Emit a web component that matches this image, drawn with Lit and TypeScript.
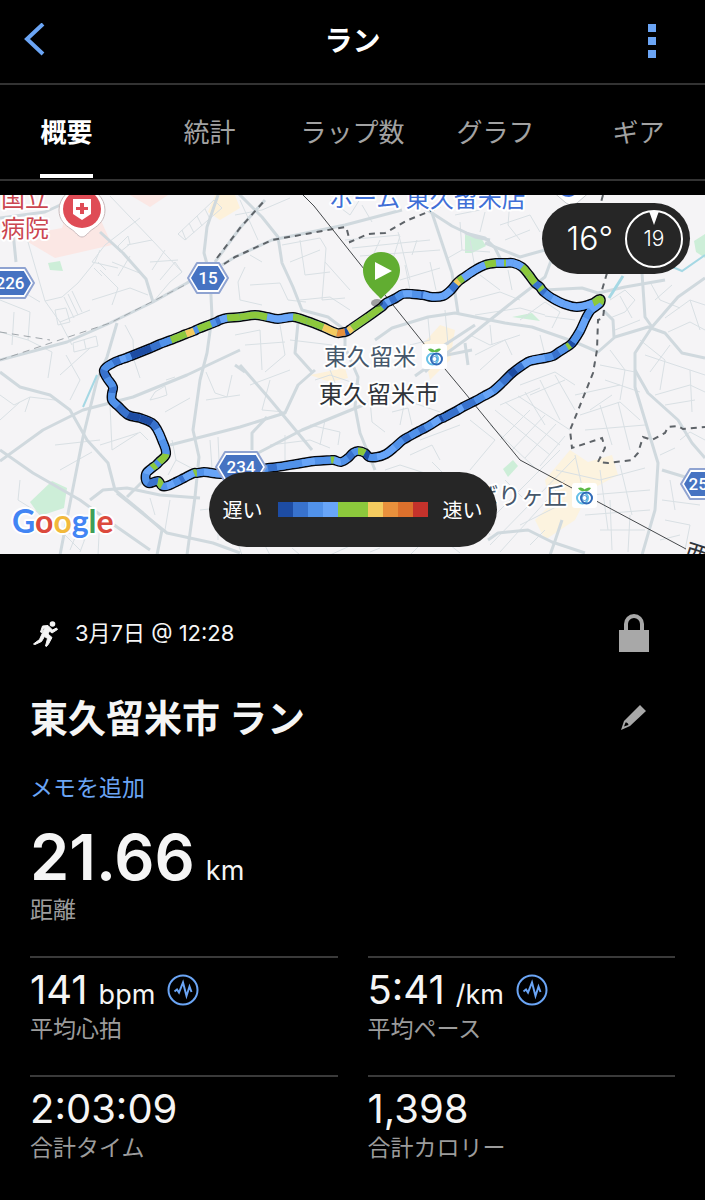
import { LitElement, html, css, svg } from "lit";
import { customElement, state, property } from "lit/decorators.js";
import { classMap } from "lit/directives/class-map.js";
import { styleMap } from "lit/directives/style-map.js";

const PACE = {
  n: "#1d4ca3",
  d: "#3872cd",
  m: "#5192ea",
  b: "#68a5f8",
  g: "#8cc83c",
  y: "#f4cb5f",
  o: "#e8903c",
  t: "#dc702c",
  r: "#c4322b",
};

type Tone = keyof typeof PACE;
type Stop = [number, number, Tone];

const LEGEND: Tone[] = ["n", "d", "m", "b", "g", "g", "y", "o", "t", "r"];

// Each stop carries the pace of the stretch that starts at it.
const ROUTE: Stop[] = [
  [382, 307, "g"], [368, 317, "g"], [352, 328, "y"], [348, 331, "n"], [345, 332, "o"], [337, 333, "y"],
  [323, 327, "g"], [307, 321, "g"], [293, 317, "b"], [278, 319, "b"], [267, 317, "g"], [255, 315, "g"],
  [240, 317, "g"], [227, 318, "b"], [220, 320, "d"], [216, 322, "m"], [211, 324, "g"], [198, 329, "m"],
  [194, 331, "y"], [186, 334, "g"], [171, 340, "m"], [160, 344, "d"], [151, 348, "n"], [131, 356, "m"],
  [126, 358, "b"], [120, 360, "d"], [113, 363, "m"], [104, 370, "d"], [107, 378, "m"], [113, 387, "d"],
  [112, 393, "m"], [112, 400, "m"], [118, 406, "d"], [128, 415, "n"], [140, 418, "n"], [152, 423, "d"],
  [157, 429, "b"], [162, 440, "m"], [166, 454, "g"], [159, 462, "m"], [156, 465, "g"], [152, 468, "b"],
  [146, 474, "m"], [148, 483, "d"], [158, 481, "g"], [162, 486, "m"], [167, 486, "b"],
  [174, 483, "m"], [180, 480, "d"], [184, 478, "b"], [194, 473, "g"], [197, 473, "m"], [204, 472, "b"],
  [220, 474, "b"], [240, 473, "m"], [268, 468, "d"], [277, 467, "m"], [302, 463, "b"], [315, 461, "m"],
  [331, 460, "g"], [334, 460, "b"], [341, 462, "m"], [348, 458, "d"], [353, 453, "m"], [358, 451, "g"],
  [365, 453, "n"], [369, 457, "m"], [377, 457, "b"], [386, 454, "b"], [395, 447, "m"], [403, 440, "d"],
  [410, 436, "m"], [419, 431, "d"], [425, 428, "m"], [432, 424, "b"], [440, 419, "n"], [443, 418, "d"],
  [458, 410, "b"], [463, 407, "d"], [475, 401, "m"], [484, 396, "b"], [493, 391, "m"], [502, 383, "d"],
  [510, 375, "n"], [516, 370, "d"], [523, 365, "b"], [530, 361, "b"], [545, 358, "m"], [553, 356, "d"],
  [559, 352, "m"], [567, 347, "g"], [570, 345, "n"], [573, 342, "m"], [580, 331, "b"], [586, 318, "m"],
  [591, 310, "b"], [600, 303, "g"], [600, 299, "g"], [593, 303, "b"], [577, 307, "b"], [564, 304, "b"],
  [552, 298, "m"], [545, 293, "d"], [542, 290, "g"], [540, 287, "d"], [535, 283, "g"], [529, 275, "g"],
  [522, 267, "b"], [513, 263, "b"], [506, 263, "g"], [504, 263, "b"], [496, 263, "g"], [485, 265, "b"],
  [475, 270, "b"], [463, 278, "g"], [459, 281, "y"], [456, 284, "d"], [451, 290, "b"], [443, 296, "b"],
  [432, 297, "b"], [423, 295, "d"], [421, 295, "m"], [412, 294, "b"], [403, 294, "m"], [396, 298, "d"],
  [390, 301, "b"], [386, 303, "d"], [382, 307, "m"],
];

const curves = ROUTE.slice(0, -1).map((p, i) => {
  const q = ROUTE[i + 1];
  const a = ROUTE[i - 1] ?? p;
  const z = ROUTE[i + 2] ?? q;
  const reach = Math.hypot(q[0] - p[0], q[1] - p[1]);
  const span = (s: Stop, e: Stop) => Math.hypot(e[0] - s[0], e[1] - s[1]) || 1;
  const k1 = reach / 3 / span(a, q);
  const k2 = reach / 3 / span(p, z);
  const c1 = [p[0] + (q[0] - a[0]) * k1, p[1] + (q[1] - a[1]) * k1];
  const c2 = [q[0] - (z[0] - p[0]) * k2, q[1] - (z[1] - p[1]) * k2];
  const n = (v: number) => v.toFixed(1);
  return {
    tone: p[2],
    from: `M${p[0]} ${p[1]}`,
    to: `C${n(c1[0])} ${n(c1[1])} ${n(c2[0])} ${n(c2[1])} ${q[0]} ${q[1]}`,
  };
});
const routeLine = curves[0].from + curves.map((c) => c.to).join("");

const ROADS = [
  "M218 195L207 227L204 253L210 275L212 317L207 353L200 380L193 430L199 457L195 497L187 555",
  "M100 232L123 253L146 279L153 302",
  "M0 360L67 342L110 323L153 302L187 283L200 274",
  "M117 323L107 357L97 380L83 437L72 493L60 555",
  "M0 372L20 387L50 395L70 410L87 440L108 463L115 490L143 513L162 530L157 555",
  "M0 450L33 473L80 500L117 527L150 550",
  "M0 461L43 430L83 410L133 397L187 375L240 350",
  "M90 500L103 490L127 488L160 495L200 498",
  "M127 497L147 477",
  "M117 493L167 533L213 543L240 553",
  "M170 445L240 427L285 413L298 385L315 370",
  "M235 190L262 217L278 237L282 263L293 287L302 310L328 317L345 330L345 347L358 377L355 407L360 433L375 470",
  "M298 323L295 353L312 372",
  "M222 265L235 257L272 240L345 225L402 210",
  "M215 262L240 228L265 200",
  "M420 205L432 213L452 226L475 237L490 240",
  "M432 213L442 243L452 273L458 313",
  "M375 340L392 328L428 317L455 313L505 323L532 327L575 342L598 352L615 337L648 327L665 333L682 353L705 358",
  "M705 278L678 297L652 327L635 353L635 387L648 430L658 463L655 510L642 555",
  "M635 370L648 393L678 420L692 443L705 458",
  "M662 470L685 477",
  "M415 376L465 340L515 300L545 277L552 258",
  "M465 233L485 238L495 248L502 262",
  "M485 243L520 257L545 250",
  "M545 290L582 288L598 293L625 287L665 280",
  "M642 273L645 317L652 327",
  "M465 343L468 365",
  "M603 310L613 320L614 337",
  "M488 540L498 533L528 530L552 542L585 553",
  "M550 555L555 541L562 520",
  "M240 365L268 397L298 433L312 450",
  "M258 453L302 430L368 403",
  "M252 450L252 433L267 417",
  "M235 365L245 372",
  "M0 218L45 212L80 196",
  "M12 222L16 262",
  "M440 348L475 325",
  "M425 372L442 356L472 350",
];

const LANES = [
  "M110 196L152 240L182 272L170 282L153 302M127 245L152 240M140 218L105 245L92 262L118 268",
  "M28 242L45 301L62 297L78 283L95 262L100 250M45 301L60 322L72 345M60 322L90 310",
  "M20 290L40 302M0 300L30 312L28 340L52 352L48 378M28 340L0 332M14 312L12 345",
  "M64 297L74 318M68 294L78 315M72 291L82 312M55 310L66 308L70 322L58 325Z",
  "M178 234L185 240L222 208L214 200ZM186 240L182 230M194 233L189 223M202 226L197 216M210 219L205 209",
  "M92 300L130 288L148 295M100 270L118 288L112 305M118 246L128 236L130 244L120 252Z",
  "M98 262L106 270M94 268L102 276M112 262L142 274M130 256L118 276",
  "M160 280L175 262L182 272M150 262L178 260M165 250L152 270",
  "M73 343L96 336L98 346L74 352ZM84 340L86 349",
  "M0 395L14 405L30 397L55 400M30 397L25 412M0 420L20 402",
  "M125 325L133 340L134 360L140 378M60 375L90 348M66 355L80 380L70 400",
  "M110 404L112 450L140 432L148 440M100 445L138 433M55 445L100 440M60 470L92 452",
  "M150 400L155 392L165 386L167 395L158 398ZM166 380L175 377",
  "M206 372L215 393L227 397L232 375M206 400L240 395M165 412L190 398",
  "M172 440L176 460L195 470M176 460L168 475M210 440L212 468M218 437L219 460",
  "M170 500L165 530M150 498L155 515M100 515L98 555M20 480L18 500L50 520M50 520L80 550",
  "M84 515L70 550M92 520L80 552M62 530L84 540M200 510L218 508L218 540",
  "M240 200L258 240M235 215L262 210L290 198M282 245L320 238L326 248L325 262L350 290M290 262L320 250",
  "M245 267L238 282L240 300L262 305M262 262L250 255M250 285L280 283L288 300L306 302",
  "M300 240L305 275L330 272M325 262L322 300L345 298M300 300L330 297L350 310",
  "M235 335L260 330L262 370M245 345L285 342M290 340L332 345M280 325L285 355L265 372",
  "M345 240L400 235M352 248L430 240M360 256L440 250M370 262L380 240M392 262L400 236M412 255L417 240",
  "M398 232L410 280M362 205L372 222M330 200L350 215L362 196M400 280L440 268",
  "M405 265L412 300M430 262L436 290M445 310L448 345M428 318L430 340L410 345",
  "M455 215L480 210M460 222L462 250L448 258M470 240L475 268M462 250L490 252",
  "M485 212L480 232M500 225L530 215L540 232M505 240L530 230M510 200L508 225L520 240",
  "M470 300L500 292L520 300M475 315L520 308L545 315M480 275L500 290M508 270L512 290",
  "M520 320L545 302L560 312L552 328M545 316L575 320M470 335L490 345L520 335",
  "M475 355L505 340L512 355M480 370L500 352M490 325L492 345M540 335L545 355",
  "M610 300L625 290L635 300L625 312L610 318M615 330L640 320M620 296L632 318",
  "M650 282L660 300L680 308M655 300L672 285M665 318L690 300L705 305M690 300L700 330",
  "M668 332L690 322L705 330M640 340L665 360L660 390M645 355L705 375M670 345L650 372",
  "M610 350L625 370L620 400M600 365L635 372M605 380L640 392M612 395L590 410",
  "M655 395L690 385L705 392M665 405L695 400M690 370L692 412M680 440L690 432L705 440M660 455L675 448",
  "M520 385L555 372L575 385M530 395L565 380M500 405L540 388M540 380L560 420M525 392L545 425M555 375L575 410",
  "M495 410L550 455M505 402L560 445M518 396L570 430M490 425L535 468M500 440L530 410M512 450L545 415M525 458L556 424M540 466L565 436",
  "M580 415L620 402L640 420M585 430L645 425M600 405L612 445M618 402L630 450M575 395L620 385",
  "M556 470L600 480L645 468M575 455L585 500M600 470L608 530M620 465L632 515M590 495L650 490M585 515L650 510M600 530L645 530M610 500L612 550M630 515L628 552",
  "M480 530L560 450M490 545L575 458M500 552L565 480M475 510L490 535M505 480L525 500M520 525L560 505M530 545L545 530",
  "M662 500L700 505M665 520L690 525L685 550M670 480L675 510M660 540L680 535",
  "M250 385L290 370M270 380L262 410L285 412M315 380L330 375L360 385M325 420L320 445M330 370L336 385",
  "M370 400L372 422L385 432M392 412L408 408L412 425M400 425L405 400L440 412M420 440L460 425M440 460L432 445L410 455M450 480L432 462M470 420L495 440L470 470",
  "M270 445L310 440L330 448M285 435L285 460M310 425L340 432M340 432L338 445M385 470L400 465L440 478",
  "M242 555L235 535M270 555L262 540M300 555L292 548M330 555L352 545M370 552L380 548M410 555L420 545M460 553L450 545",
];

const DASHES = [
  "M217 258L240 228L265 200", "M224 264L235 257L272 240L345 227",
  "M347 230L350 242L368 234L385 233L408 220L428 212L440 207", "M603 195L600 206", "M607 273L600 297",
  "M604 310L603 318L598 320L597 350L593 373L577 413L570 430L572 448L602 438L605 448L598 462L608 463L632 460L638 453L643 437L652 440L665 433L668 427L678 426L683 429L705 427",
];

const shield = (cx: number, cy: number, half: number, label: string, tx = cx) => {
  const hex = (w: number, h: number) =>
    `M${cx - w} ${cy}L${cx - w + h * 0.6} ${cy - h}H${cx + w - h * 0.6}L${cx + w} ${cy}L${cx + w - h * 0.6} ${cy + h}H${cx - w + h * 0.6}Z`;
  return svg`<g stroke-linejoin="round">
    <path d=${hex(half, 15)} fill="#fff" stroke="#8fa3d1" stroke-width="2"></path>
    <path d=${hex(half - 3, 12)} fill="#4673c2"></path>
    <text class="route-no" x=${tx} y=${cy + 6}>${label}</text>
  </g>`;
};

const station = (x: number, y: number) => svg`<g transform="translate(${x} ${y})">
  <rect width="25" height="25" rx="3" fill="#fff"></rect>
  <path d="M6 5C9 3.500 11.500 5 12.500 6.500C14 5 17 3.500 19 5C17.500 8 14.500 8.500 12.500 8C10.500 8.500 7.500 8 6 5Z" fill="#5bb947"></path>
  <g fill="none" stroke-width="2">
    <circle cx="10.500" cy="15" r="5.500" stroke="#65bfe6"></circle>
    <circle cx="14.500" cy="15" r="5.500" stroke="#2f6ab8"></circle>
    <circle cx="12.500" cy="15" r="2.500" stroke="#4b94d4" stroke-width="1"></circle>
  </g>
</g>`;

@customElement("run-map")
class RunMap extends LitElement {
  static styles = css`
    :host { display: block; position: relative; background: #f5f4f6; }
    .canvas { display: block; width: 100%; height: auto; }
    text { font-family: "Noto Sans CJK JP", sans-serif; }
    .halo { stroke: #fff; stroke-width: 4px; paint-order: stroke; stroke-linejoin: round; }
    .place { font-size: 23px; fill: #46576a; }
    .town { font-size: 24px; fill: #30343a; }
    .shop { font-size: 24px; fill: #3f6fd6; }
    .clinic { font-size: 24px; fill: #cb4650; }
    .route-no { font: 500 17px Roboto, sans-serif; fill: #fff; text-anchor: middle; }
    .google { font: 700 32px Lato, sans-serif; }
    .pill {
      position: absolute;
      display: flex;
      align-items: center;
      background: #262626;
      color: #fff;
    }
    .weather {
      top: 8px;
      right: 15px;
      height: 71px;
      padding: 0 6px 0 25px;
      gap: 11px;
      border-radius: 36px;
      font: 300 32px/40px Inter, sans-serif;
    }
    .wind { display: block; width: 60px; height: 60px; }
    .wind text { font: 300 21px Inter, sans-serif; fill: #fff; text-anchor: middle; }
    .legend {
      bottom: 7px;
      left: 50%;
      transform: translateX(-50%);
      height: 75px;
      padding: 0 14px;
      gap: 15px;
      border-radius: 38px;
      white-space: nowrap;
      font: 400 20px/30px "Noto Sans CJK JP", sans-serif;
    }
    .scale { display: flex; }
    .step { width: 15px; height: 15px; }
  `;

  render() {
    return html`
      <svg class="canvas" viewBox="0 195 705 359" role="img" aria-label="ランのルート">
        <rect y="190" width="705" height="370" fill="#f5f4f6"></rect>
        <path d="M62 228L72 196H90L112 245L55 258L28 242L40 232Z" fill="#fbe7e4"></path>
        <path d="M130 195H168L150 207Z" fill="#fbe7e4"></path>
        <path d="M215 195H235L240 208L220 220L208 212Z" fill="#fdf1da"></path>
        <path d="M545 480L570 450L588 462L612 455L618 475L590 490L575 520L545 540L535 520L550 505Z" fill="#fcf3df"></path>
        <path d="M422 345L440 325L455 330L450 360L430 380Z" fill="#fcf1dc"></path>
        <path d="M310 375L345 368L348 378L330 382Z" fill="#fdf1da"></path>
        <g fill="#cdeed8">
          <path d="M48 263L60 261L63 271L50 270Z"></path>
          <path d="M30 502L52 481L67 488L64 508L40 516Z"></path>
          <path d="M465 235L480 236L486 246L472 253L465 253Z"></path>
          <path d="M512 317L532 313L540 321Z"></path>
          <path d="M694 241L705 234V258L696 252Z"></path>
          <path d="M503 469L513 460L518 466L508 477Z"></path>
        </g>
        <g fill="none" stroke="#d9e0e4">${LANES.map((d) => svg`<path d=${d}></path>`)}</g>
        <g fill="none" stroke="#d0d9de" stroke-width="3" stroke-linejoin="round">
          ${ROADS.map((d) => svg`<path d=${d}></path>`)}
        </g>
        <g fill="none" stroke="#a5d8e4" stroke-width="2">
          <path d="M623 276L609 298" stroke-width="3"></path>
          <path d="M97 375L83 407"></path>
          <path d="M668 265L682 271L705 255"></path>
        </g>
        <path d="M0 332L50 340M0 360L110 323L187 284" fill="none" stroke="#9fa5aa" stroke-dasharray="7 5"></path>
        <g fill="none" stroke="#5e6368" stroke-width="2" stroke-dasharray="6 5">
          ${DASHES.map((d) => svg`<path d=${d}></path>`)}
        </g>
        <path d="M303 195L314 206L360 264L393 305L425 345L465 393L520 460L572 488L686 549" fill="none" stroke="#45484b"></path>

        <g fill="none" stroke-linejoin="round">
          <path d=${routeLine} stroke="#05070c" stroke-width="10" stroke-linecap="round"></path>
          <path d=${routeLine} stroke=${PACE.m} stroke-width="7" stroke-linecap="round"></path>
          ${curves.map((c) => svg`<path d=${c.from + c.to} stroke=${PACE[c.tone]} stroke-width="7"></path>`)}
        </g>

        <text class="clinic halo" x="1" y="207">国立</text>
        <text class="clinic halo" x="1" y="237">病院</text>
        <text class="shop halo" x="329" y="207">ホーム 東久留米店</text>
        <text class="place halo" x="324" y="365">東久留米</text>
        <text class="town halo" x="319" y="403">東久留米市</text>
        <text class="place halo" x="567" y="504" text-anchor="end">ばりヶ丘</text>
        <text class="town" transform="translate(683 559) rotate(18)">西</text>
        ${station(422, 344)}${station(572, 483)}

        ${shield(208, 278, 20, "15")}${shield(10, 283, 24, "226")}
        ${shield(241, 467, 25, "234")}${shield(705, 484, 24, "256", 703)}

        <path d="M551 190H592L577 203Q572 207 566 203Z" fill="#fff" stroke="#c9ccd0"></path>
        <path d="M558 190H578Q576 196 569 197Q561 197 558 190Z" fill="#3f6fd6"></path>

        <path d="M82 188C95 188 105 198 105 210C105 220 99 225 93 229C88 232 86 237 82 237C78 237 76 232 71 229C65 225 59 220 59 210C59 198 69 188 82 188Z" fill="#fff" stroke="#c9b9bb"></path>
        <circle cx="82" cy="209" r="19" fill="#df4c56"></circle>
        <path d="M73 199H91V214L82 220L73 214Z" fill="#fff"></path>
        <path d="M80 203H84V207H88V210H84V214H80V210H76V207H80Z" fill="#df4c56"></path>

        <ellipse cx="377" cy="303" rx="6" ry="4" fill="#000" opacity=".35"></ellipse>
        <path d="M381 299C375 292 363 284 363 270C363 260 371 252 381 252C392 252 400 260 400 270C400 284 387 292 381 299Z" fill="#61ad31"></path>
        <path d="M375 262V280L392 271Z" fill="#fff"></path>

        <text class="google halo" x="12" y="533"><tspan fill="#4285f4">G</tspan><tspan fill="#dc4a3d">o</tspan><tspan fill="#f2b93b">o</tspan><tspan fill="#4285f4">g</tspan><tspan fill="#3f9f57">l</tspan><tspan fill="#dc4a3d">e</tspan></text>
      </svg>

      <div class="pill weather">
        <span>16°</span>
        <svg class="wind" viewBox="0 0 60 60" role="img" aria-label="風速 19">
          <circle cx="30" cy="30" r="28" fill="none" stroke="#fff" stroke-width="2"></circle>
          <path d="M25 2L30 16L35 2Z" fill="#fff"></path>
          <text x="30" y="37">19</text>
        </svg>
      </div>

      <div class="pill legend">
        <span>遅い</span>
        <div class="scale">
          ${LEGEND.map((t) => html`<span class="step" style=${styleMap({ background: PACE[t] })}></span>`)}
        </div>
        <span>速い</span>
      </div>
    `;
  }
}

@customElement("stat-cell")
class StatCell extends LitElement {
  @property() value = "";
  @property() unit = "";
  @property() label = "";
  @property({ type: Boolean }) chart = false;

  static styles = css`
    :host { display: block; border-top: 2px solid #3a3a3a; padding-top: 8px; }
    .figure { display: flex; align-items: baseline; height: 48px; font-size: 40px; line-height: 48px; }
    .unit { margin-left: 11px; font-size: 27px; }
    .label { color: #9c9c9c; font-size: 23px; line-height: 30px; }
    .open {
      align-self: center;
      width: 32px;
      height: 32px;
      margin: 0 0 0 12px;
      padding: 0;
      border: 0;
      background: none;
      color: #6ba5f5;
      cursor: pointer;
    }
    .open svg { display: block; width: 100%; height: 100%; }
  `;

  render() {
    return html`
      <div class="figure">
        <span>${this.value}</span>
        ${this.unit ? html`<span class="unit">${this.unit}</span>` : ""}
        ${this.chart
          ? html`<button class="open" aria-label=${this.label + "のグラフ"}>
              <svg viewBox="0 0 32 32" fill="none" stroke="currentColor" stroke-width="2">
                <circle cx="16" cy="16" r="14.500"></circle>
                <path d="M7.500 17.500L10 15.500L12 18.500L16 8.500L19.500 22L22.500 12.500L24.500 18"></path>
              </svg>
            </button>`
          : ""}
      </div>
      <div class="label">${this.label}</div>
    `;
  }
}

@customElement("app-root")
class AppRoot extends LitElement {
  @state() private tab = "概要";

  private tabs = ["概要", "統計", "ラップ数", "グラフ", "ギア"];

  static styles = css`
    :host {
      display: block;
      min-height: 100vh;
      background: #000;
      color: #f5f5f5;
      font-family: Inter, "Noto Sans CJK JP", sans-serif;
      overflow: hidden;
    }
    * { box-sizing: border-box; }
    button { margin: 0; padding: 0; border: 0; background: none; color: inherit; font: inherit; cursor: pointer; }
    svg { display: block; }
    .bar {
      display: grid;
      grid-template-columns: 60px 1fr 60px;
      align-items: center;
      height: 85px;
      padding: 0 23px 2px 5px;
      border-bottom: 2px solid #333;
    }
    .heading { margin: 0; padding-left: 18px; text-align: center; font-size: 28px; line-height: 40px; font-weight: 700; color: #fff; }
    .action { display: grid; place-items: center; height: 60px; color: #6ba5f5; }
    .tabs {
      display: grid;
      grid-template-columns: repeat(5, 1fr);
      margin: 0 -5px 14px;
      border-bottom: 2px solid #333;
    }
    .tab { display: flex; justify-content: center; height: 94px; color: #a2a2a2; font-size: 26px; }
    .name { height: 93px; line-height: 96px; }
    .active .name { color: #fff; font-weight: 700; border-bottom: 4px solid #fff; }
    .body { padding: 51px 30px 36px; }
    .row { display: flex; align-items: center; justify-content: space-between; }
    .when { height: 56px; }
    .date { display: flex; align-items: center; gap: 17px; font-size: 22px; line-height: 32px; }
    .lock, .edit { width: 32px; margin-right: 25px; color: #a8a8a8; }
    .edit { display: grid; place-items: center; height: 48px; }
    .title { margin: 0; font-size: 38px; line-height: 48px; font-weight: 700; }
    .titled { margin: 33px 0 30px; }
    .memo { display: block; color: #6ba5f5; font-size: 23px; line-height: 32px; text-decoration: none; }
    .distance { display: flex; align-items: baseline; gap: 11px; height: 72px; margin-top: 17px; font-size: 63px; line-height: 72px; font-weight: 600; }
    .km { font-size: 27px; font-weight: 400; }
    .label { color: #9c9c9c; font-size: 23px; line-height: 34px; }
    .stats { display: grid; grid-template-columns: 1fr 1fr; gap: 31px 30px; margin-top: 29px; }
  `;

  render() {
    return html`
      <header class="bar">
        <button class="action" aria-label="戻る">
          <svg width="26" height="36" viewBox="0 0 26 36" fill="none" stroke="currentColor" stroke-width="4"><path d="M21 1L5 16L21 31"></path></svg>
        </button>
        <h1 class="heading">ラン</h1>
        <button class="action" aria-label="メニュー">
          <svg width="8" height="34" viewBox="0 0 8 34" fill="currentColor"><path d="M0 0H8V8H0ZM0 13H8V21H0ZM0 26H8V34H0Z"></path></svg>
        </button>
      </header>
      <div class="tabs" role="tablist">
        ${this.tabs.map(
          (t) => html`<button
            role="tab"
            aria-selected=${t === this.tab ? "true" : "false"}
            class=${classMap({ tab: true, active: t === this.tab })}
            @click=${() => (this.tab = t)}
          ><span class="name">${t}</span></button>`,
        )}
      </div>
      <run-map></run-map>
      <main class="body">
        <div class="row when">
          <div class="date">
            <svg width="28" height="28" viewBox="0 0 28 28" fill="#f5f5f5">
              <circle cx="22.500" cy="5" r="2.800"></circle>
              <path d="M12.500 7L18 6.500L20.500 9L22.500 11L26.500 9L27.500 10.500L22 14L19.500 12L18 15L22 18.500L18.500 25L16.500 27.500L15.500 27L17.500 19.500L14.500 17.500L11.500 22.500L5 25.500L3.500 25L9.500 20.500L12 15L14.500 9.500L13.500 9L12 13.500L10.500 13Z" stroke="#f5f5f5" stroke-linejoin="round"></path>
            </svg>
            <time>3月7日 @ 12:28</time>
          </div>
          <svg class="lock" height="38" viewBox="0 0 32 38" role="img" aria-label="非公開">
            <path d="M8 18V10A8 8 0 0 1 24 10V18" fill="none" stroke="currentColor" stroke-width="4"></path>
            <path d="M1 16H31V38H1Z" fill="currentColor"></path>
          </svg>
        </div>
        <div class="row titled">
          <h2 class="title">東久留米市 ラン</h2>
          <button class="edit" aria-label="編集">
            <svg width="28" height="28" viewBox="0 0 28 28" fill="currentColor" fill-rule="evenodd"><path d="M20 1L26 7L10 22L1 26L4 17ZM5.500 18.500L4 22.500L8.500 21L8 19.500L6.500 18.500Z"></path></svg>
          </button>
        </div>
        <a class="memo" href="#memo">メモを追加</a>
        <div class="distance"><span>21.66</span><span class="km">km</span></div>
        <div class="label">距離</div>
        <div class="stats">
          <stat-cell value="141" unit="bpm" label="平均心拍" chart></stat-cell>
          <stat-cell value="5:41" unit="/km" label="平均ペース" chart></stat-cell>
          <stat-cell value="2:03:09" label="合計タイム"></stat-cell>
          <stat-cell value="1,398" label="合計カロリー"></stat-cell>
        </div>
      </main>
    `;
  }
}
